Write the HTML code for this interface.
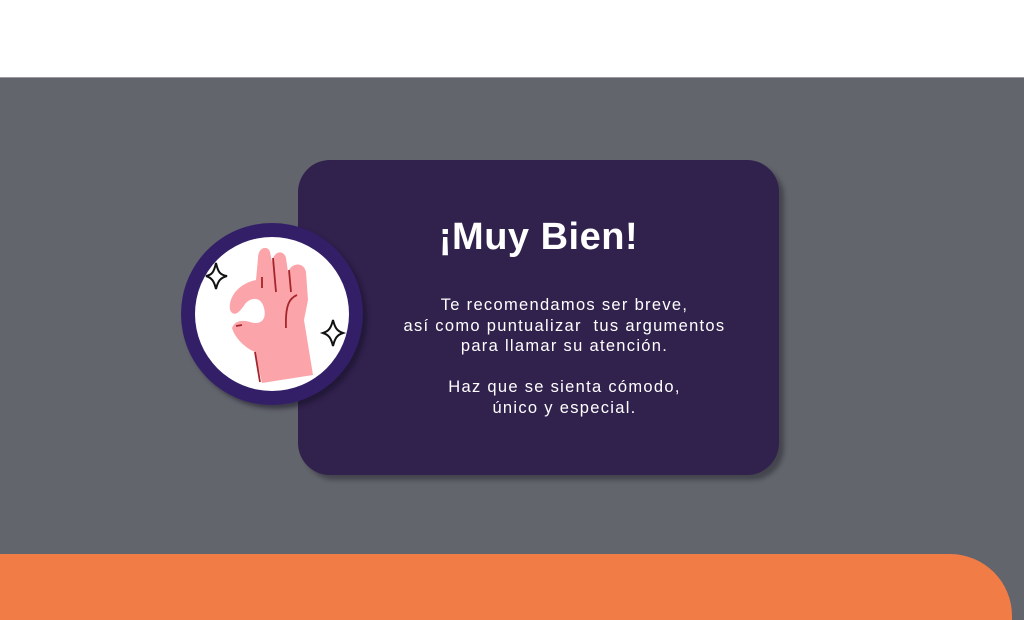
<!DOCTYPE html>
<html><head><meta charset="utf-8">
<style>
html,body{margin:0;padding:0;width:1024px;height:620px;overflow:hidden;background:#fff;font-family:"Liberation Sans",sans-serif;position:relative;}
.gray{position:absolute;left:0;top:77px;width:1024px;height:543px;background:#63656d;border-top:1px solid #9a9ba0;box-sizing:border-box;}
.orange{position:absolute;left:0;top:554px;width:1012px;height:66px;background:#f27c45;border-top-right-radius:62px 62px;}
.card{position:absolute;left:298px;top:160px;width:481px;height:315px;background:#31214d;border-radius:32px;box-shadow:5px 5px 4px rgba(30,30,40,0.45);}
.title{position:absolute;left:0;width:481px;top:56px;text-align:center;color:#fff;font-weight:bold;font-size:38px;letter-spacing:0.5px;}
.txt{position:absolute;width:481px;left:26px;top:135px;text-align:center;color:#fff;font-size:16.5px;line-height:20.5px;letter-spacing:1.3px;}
.circ{position:absolute;left:181px;top:223px;width:182px;height:182px;border-radius:50%;background:#331f68;box-shadow:4px 4px 4px rgba(20,15,35,0.5);}
.inner{position:absolute;left:14px;top:14px;width:154px;height:154px;border-radius:50%;background:#fff;}
</style></head><body>
<div class="gray"></div>
<div class="orange"></div>
<div class="card">
  <div class="title">¡Muy Bien!</div>
  <div class="txt">Te recomendamos ser breve,<br>así como puntualizar&nbsp; tus argumentos<br>para llamar su atención.<br><br>Haz que se sienta cómodo,<br>único y especial.</div>
</div>
<div class="circ"><div class="inner"></div></div>
<svg style="position:absolute;left:0;top:0" width="1024" height="620">
  <path fill="#fba5ab" d="M262,383 L255,352 C245,348 235,338 232,328 C235,320 243,320 250,322 C262,326 268,318 263,305 C259,296 250,298 245,304 C240,312 234,318 230,310 C228,296 240,283 256,280 L258,258 C258,247 268,245 270,252 L272,262 C274,250 284,250 286,258 L288,272 C292,262 304,262 306,272 L308,300 L304,320 L313,375 Z"/>
  <path fill="none" stroke="#a4262c" stroke-width="1.8" d="M273,258 L276,292 M289,270 L291,292 M297,295 C290,298 285,304 286,328 M262,277 L262,288 M242,325 L236,326 M255,352 L260,382"/>
  <path fill="none" stroke="#111" stroke-width="2" d="M216,263 C218,272 220,275 227,276 C220,278 218,281 216,289 C214,281 212,278 206,276 C212,275 214,272 216,263 Z"/>
  <path fill="none" stroke="#111" stroke-width="2" d="M333,320 C335,328 337,331 343,333 C337,335 335,338 333,346 C331,338 329,335 323,333 C329,331 331,328 333,320 Z"/>
</svg>
</body></html>
